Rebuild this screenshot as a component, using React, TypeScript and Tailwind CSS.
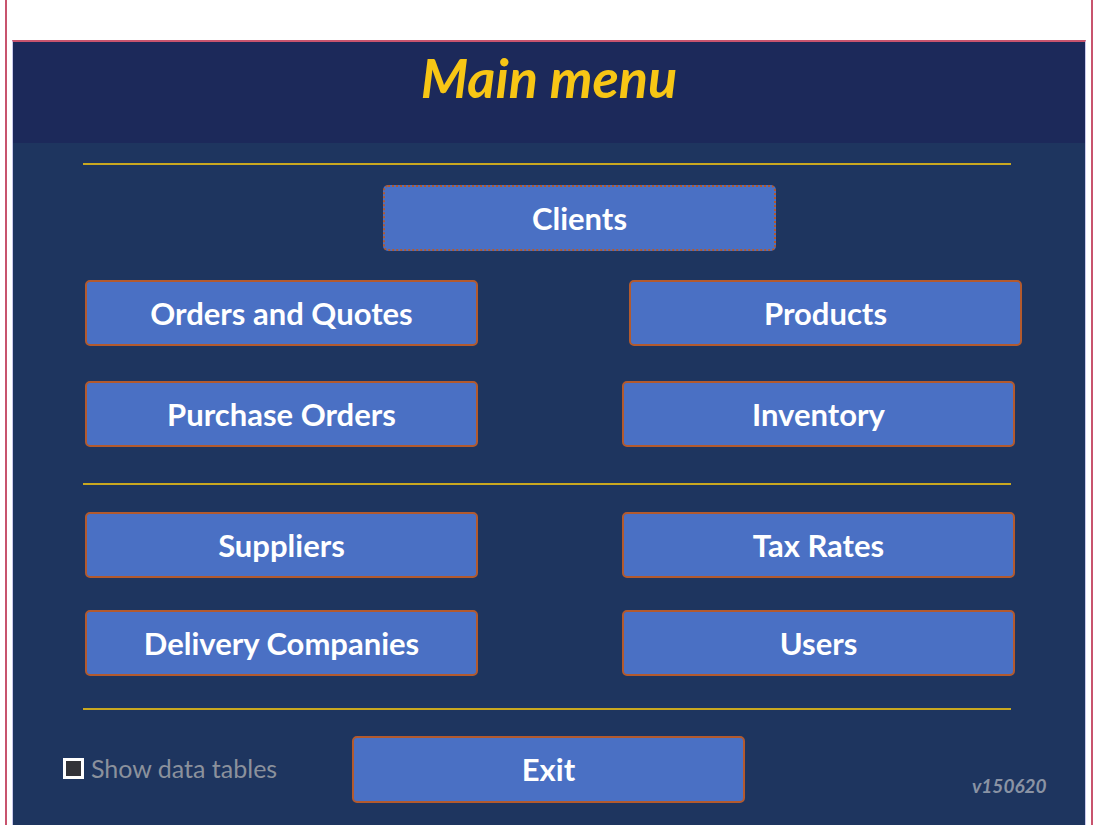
import React from "react"

const font = { fontFamily: "Lato, 'Noto Sans', sans-serif" }

function MenuButton({ label, className = "" }: { label: string; className?: string }) {
  return (
    <button
      className={`flex h-[66px] w-[393px] shrink-0 items-center justify-center rounded-[5px] border-2 border-[#b35a2e] bg-[#4a70c4] text-[31px] font-bold leading-none text-white ${className}`}
    >
      {label}
    </button>
  )
}

function Rule({ className = "" }: { className?: string }) {
  return <div className={`ml-[70px] h-[2px] w-[928px] bg-[#c9a820] ${className}`} />
}

export default function App() {
  return (
    <div className="h-[825px] w-[1100px] overflow-hidden bg-white" style={font}>
      <div className="ml-[5px] h-full w-[1088px] border-x-2 border-[#c8546e] pt-[40px]">
        <div className="ml-[5px] h-full w-[1074px] border-t-2 border-x border-t-[#c8546e] border-x-[#c9c9ec]">
          {/* header */}
          <div className="flex h-[101px] justify-center bg-[#1c295a] pt-[5px]">
            <h1 className="text-[54px] font-bold italic leading-[62px] text-[#f7c615]">Main menu</h1>
          </div>

          {/* body */}
          <div className="flex h-full flex-col bg-[#1e355f] pt-[20px]">
            <Rule />
            <div className="mt-[20px] flex pl-[370px]">
              <MenuButton label="Clients" className="border-dotted" />
            </div>
            <div className="mt-[29px] flex pl-[72px]">
              <MenuButton label="Orders and Quotes" />
              <MenuButton label="Products" className="ml-[151px]" />
            </div>
            <div className="mt-[35px] flex pl-[72px]">
              <MenuButton label="Purchase Orders" />
              <MenuButton label="Inventory" className="ml-[144px]" />
            </div>
            <Rule className="mt-[36px]" />
            <div className="mt-[27px] flex pl-[72px]">
              <MenuButton label="Suppliers" />
              <MenuButton label="Tax Rates" className="ml-[144px]" />
            </div>
            <div className="mt-[32px] flex pl-[72px]">
              <MenuButton label="Delivery Companies" />
              <MenuButton label="Users" className="ml-[144px]" />
            </div>
            <Rule className="mt-[32px]" />

            {/* bottom row */}
            <div className="mt-[26px] flex items-start">
              <div className="w-[339px] shrink-0 pl-[50px] pt-[17px]">
                <label className="flex items-center gap-[7px] text-[25px] leading-[30px] text-[#8b919c]">
                  <span className="h-[21px] w-[21px] shrink-0 border-[3px] border-white bg-[#333338]" />
                  Show data tables
                </label>
              </div>
              <MenuButton label="Exit" className="h-[67px]" />
              <span className="ml-[227px] mt-[36px] text-[19px] font-bold italic text-[#8a93a4]">v150620</span>
            </div>
          </div>
        </div>
      </div>
    </div>
  )
}
